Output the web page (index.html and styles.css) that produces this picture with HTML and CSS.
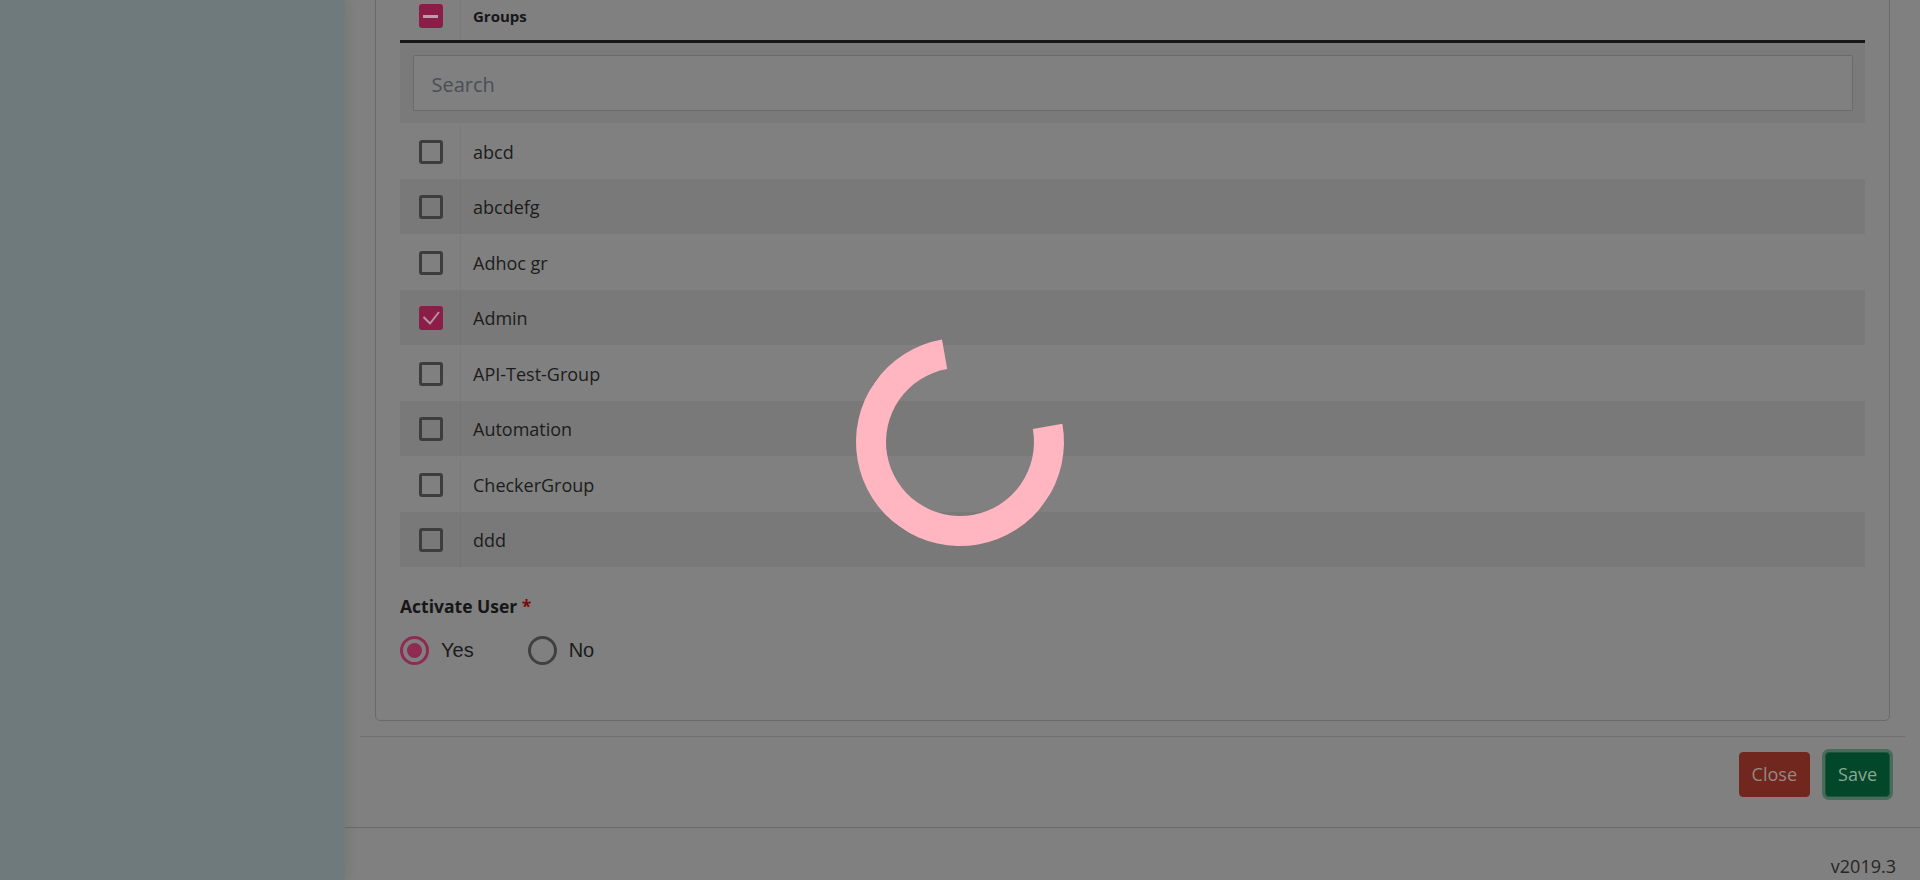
FILE: index.html
```html
<!DOCTYPE html>
<html lang="en">
<head>
<meta charset="utf-8">
<title>Edit User</title>
<link rel="stylesheet" href="styles.css">
</head>
<body>
<div class="app">
  <aside class="sidebar"></aside>
  <main class="main">
    <div class="content">
      <section class="panel">
        <div class="card">
          <div class="group-list">
            <div class="gl-head">
              <div class="gl-check"><span class="cb cb-partial"></span></div>
              <div class="gl-name gl-title">Groups</div>
            </div>
            <div class="gl-search">
              <input class="search-input" type="text" placeholder="Search">
            </div>
            <div class="gl-rows">
              <div class="gl-row">
                <div class="gl-check"><span class="cb"></span></div>
                <div class="gl-name">abcd</div>
              </div>
              <div class="gl-row">
                <div class="gl-check"><span class="cb"></span></div>
                <div class="gl-name">abcdefg</div>
              </div>
              <div class="gl-row">
                <div class="gl-check"><span class="cb"></span></div>
                <div class="gl-name">Adhoc gr</div>
              </div>
              <div class="gl-row">
                <div class="gl-check"><span class="cb cb-checked"><svg viewBox="0 0 24 24" width="24" height="24"><polyline points="4.5,11 11,17.5 20,6" fill="none" stroke="#b5939f" stroke-width="2"/></svg></span></div>
                <div class="gl-name">Admin</div>
              </div>
              <div class="gl-row">
                <div class="gl-check"><span class="cb"></span></div>
                <div class="gl-name">API-Test-Group</div>
              </div>
              <div class="gl-row">
                <div class="gl-check"><span class="cb"></span></div>
                <div class="gl-name">Automation</div>
              </div>
              <div class="gl-row">
                <div class="gl-check"><span class="cb"></span></div>
                <div class="gl-name">CheckerGroup</div>
              </div>
              <div class="gl-row">
                <div class="gl-check"><span class="cb"></span></div>
                <div class="gl-name">ddd</div>
              </div>
            </div>
          </div>
          <div class="form-group">
            <div class="form-label">Activate User <span class="req">*</span></div>
            <div class="radios">
              <label class="radio"><span class="radio-dot radio-on"></span><span class="radio-text">Yes</span></label>
              <label class="radio"><span class="radio-dot"></span><span class="radio-text">No</span></label>
            </div>
          </div>
        </div>
        <div class="panel-footer">
          <button class="btn btn-close">Close</button>
          <button class="btn btn-save">Save</button>
        </div>
      </section>
    </div>
    <footer class="page-footer">v2019.3</footer>
  </main>
</div>
<div class="loading-overlay"><div class="spinner"></div></div>
</body>
</html>
```
FILE: styles.css
```css
html, body {
  margin: 0;
  padding: 0;
  height: 100%;
  overflow: hidden;
}
body {
  font-family: "Open Sans", "Noto Sans", sans-serif;
  color: #1c1c1c;
  background: #808080;
}
.app {
  display: flex;
  height: 880px;
}
.sidebar {
  width: 345px;
  flex: none;
  background: #6f7a7d;
  box-shadow: 4px 0 10px rgba(0, 0, 0, 0.07);
  position: relative;
  z-index: 1;
}
.main {
  flex: 1;
  display: flex;
  flex-direction: column;
  background: #808080;
  min-width: 0;
}
.content {
  flex: 1;
  overflow: hidden;
  padding: 0 15px;
}
.panel {
  display: flex;
  flex-direction: column;
}
.card {
  margin: -33px 15px 0;
  border: 1px solid #6a6a6a;
  border-radius: 5px;
  padding: 24px;
}
.group-list {
  display: flex;
  flex-direction: column;
}
.gl-head {
  display: flex;
  height: 48px;
  border-bottom: 3px solid #161616;
}
.gl-check {
  width: 61px;
  box-sizing: border-box;
  flex: none;
  display: flex;
  align-items: center;
  justify-content: center;
  padding-left: 1px;
  border-right: 1px solid rgba(0, 0, 0, 0.045);
}
.gl-name {
  flex: 1;
  display: flex;
  align-items: center;
  padding-left: 12px;
  font-size: 18px;
  color: #1c1c1c;
}
.gl-title {
  font-size: 15px;
  font-weight: 700;
  color: #171717;
}
.gl-search {
  background: #7a7a7a;
  padding: 12px 12.5px;
}
.search-input {
  display: block;
  width: 100%;
  height: 56px;
  box-sizing: border-box;
  border: 1px solid #6b6b6b;
  border-radius: 2px;
  background: #808080;
  padding: 2px 18px 0;
  font-family: "Open Sans", sans-serif;
  font-size: 20px;
  color: #1c1c1c;
  outline: none;
}
.search-input::placeholder {
  color: #4a4f55;
}
.gl-rows {
  display: flex;
  flex-direction: column;
}
.gl-row {
  display: flex;
  height: 55.5px;
  box-sizing: border-box;
  padding-top: 2px;
  background: #808080;
}
.gl-row:nth-child(even) {
  background: #797979;
}
.cb {
  width: 24px;
  height: 24px;
  box-sizing: border-box;
  border: 3px solid #3d3d3d;
  border-radius: 3px;
  display: flex;
  align-items: center;
  justify-content: center;
}
.cb-checked, .cb-partial {
  background: #8c1d48;
  border-color: #8c1d48;
}
.cb-checked {
  border: 0;
}
.cb-checked svg {
  display: block;
}
.cb-partial::after {
  content: "";
  width: 15px;
  height: 3px;
  background: #c09cab;
}
.form-group {
  margin-top: 27px;
  margin-bottom: 31px;
}
.form-label {
  font-size: 17.5px;
  font-weight: 700;
  line-height: 25.5px;
  color: #161616;
}
.req {
  color: #7c0a0a;
}
.radios {
  display: flex;
  gap: 54px;
  margin-top: 16.5px;
}
.radio {
  display: flex;
  align-items: center;
  gap: 12px;
  font-family: "Liberation Sans", Arial, sans-serif;
  font-size: 20px;
  color: #1b1b1b;
}
.radio-dot {
  width: 29px;
  height: 29px;
  box-sizing: border-box;
  border: 3px solid #404040;
  border-radius: 50%;
  display: flex;
  align-items: center;
  justify-content: center;
}
.radio-on {
  border-color: #8f2a50;
}
.radio-on::after {
  content: "";
  width: 15px;
  height: 15px;
  border-radius: 50%;
  background: #8f2a50;
}
.panel-footer {
  margin-top: 15px;
  border-top: 1px solid #6f6f6f;
  padding: 15.3px 15px;
  display: flex;
  justify-content: flex-end;
  gap: 15px;
}
.btn {
  font-family: "Open Sans", sans-serif;
  font-size: 18px;
  line-height: 27px;
  padding: 8px 12px;
  border: 1px solid transparent;
  border-radius: 4px;
}
.btn-close {
  background: #71261e;
  border-color: #71261e;
  color: #978884;
}
.btn-save {
  background: #03472a;
  border-color: #1d563c;
  color: #8da596;
  box-shadow: 0 0 0 3px #4a6a5b;
}
.page-footer {
  flex: none;
  height: 52px;
  border-top: 1px solid #6a6a6a;
  box-sizing: content-box;
  padding: 0 24px;
  display: flex;
  align-items: flex-end;
  justify-content: flex-end;
  font-size: 18px;
  line-height: 27px;
  color: #262626;
}
.loading-overlay {
  position: fixed;
  inset: 0;
  display: flex;
  align-items: center;
  justify-content: center;
  padding-top: 3px;
  z-index: 10;
}
.spinner {
  width: 208px;
  height: 208px;
  box-sizing: border-box;
  border: 30px solid #ffb6c1;
  border-top-color: transparent;
  border-radius: 50%;
  transform: rotate(35deg);
}
```
